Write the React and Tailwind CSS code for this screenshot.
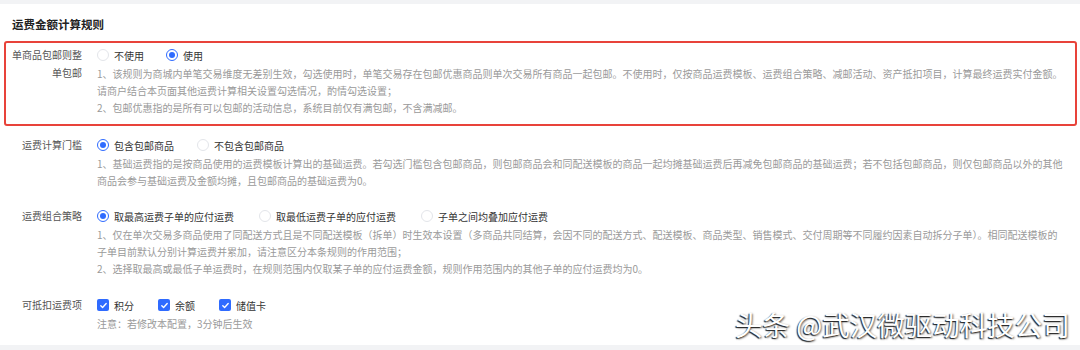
const Radio = ({ checked }) => (
  <span
    className={
      "flex h-[12px] w-[12px] shrink-0 items-center justify-center rounded-full border bg-white " +
      (checked ? "border-[#2f6bff]" : "border-[#e3e5ea]")
    }
  >
    {checked && <span className="h-[6px] w-[6px] rounded-full bg-[#2f6bff]" />}
  </span>
);

const Check = () => (
  <span className="flex h-[12px] w-[12px] shrink-0 items-center justify-center rounded-[2px] bg-[#2f6bff]">
    <svg width="9" height="9" viewBox="0 0 10 10" fill="none">
      <path d="M2 5.2l2 2 4-4.4" stroke="#fff" strokeWidth="1.5" strokeLinecap="round" strokeLinejoin="round" />
    </svg>
  </span>
);

const Options = ({ items, gap }) => (
  <div className={"flex h-[18px] items-center " + gap}>
    {items.map(([label, checked]) => (
      <label key={label} className="flex items-center gap-[5px] text-[#333]">
        <Radio checked={checked} />
        <span>{label}</span>
      </label>
    ))}
  </div>
);

const Desc = ({ lines }) => (
  <div className="mt-[1px] text-[#9a9a9a]">
    {lines.map((l) => (
      <div key={l} className="whitespace-nowrap leading-[17px]">
        {l}
      </div>
    ))}
  </div>
);

const Row = ({ label, children, className = "" }) => (
  <div className={"flex " + className}>
    <div className="w-[70px] shrink-0 text-right leading-[18px] text-[#555]">{label}</div>
    <div className="ml-[15px] min-w-0 flex-1">{children}</div>
  </div>
);

export default function App() {
  return (
    <div
      className="relative flex h-[350px] w-[1080px] flex-col overflow-hidden bg-white text-[10px]"
      style={{ fontFamily: '"Noto Sans CJK SC", "Noto Sans", sans-serif' }}
    >
      <div className="h-[4px] bg-[#f2f3f5]" />
      <h2 className="ml-[12px] mt-[11px] text-[11.5px] font-bold leading-[18px] text-[#222]">运费金额计算规则</h2>

      <div className="ml-[4px] mr-[3px] mt-[8px] rounded-[3px] border-2 border-[#e8433a] pb-[8px] pl-[6px] pt-[3px]">
        <Row label={<>单商品包邮则整<br />单包邮</>}>
          <Options gap="gap-[22px]" items={[["不使用", false], ["使用", true]]} />
          <Desc
            lines={[
              "1、该规则为商城内单笔交易维度无差别生效，勾选使用时，单笔交易存在包邮优惠商品则单次交易所有商品一起包邮。不使用时，仅按商品运费模板、运费组合策略、减邮活动、资产抵扣项目，计算最终运费实付金额。",
              "请商户结合本页面其他运费计算相关设置勾选情况，酌情勾选设置；",
              "2、包邮优惠指的是所有可以包邮的活动信息，系统目前仅有满包邮，不含满减邮。",
            ]}
          />
        </Row>
      </div>

      <Row label="运费计算门槛" className="ml-[12px] mt-[10px]">
        <Options gap="gap-[23px]" items={[["包含包邮商品", true], ["不包含包邮商品", false]]} />
        <Desc
          lines={[
            "1、基础运费指的是按商品使用的运费模板计算出的基础运费。若勾选门槛包含包邮商品，则包邮商品会和同配送模板的商品一起均摊基础运费后再减免包邮商品的基础运费；若不包括包邮商品，则仅包邮商品以外的其他",
            "商品会参与基础运费及金额均摊，且包邮商品的基础运费为0。",
          ]}
        />
      </Row>

      <Row label="运费组合策略" className="ml-[12px] mt-[18px]">
        <Options
          gap="gap-[25px]"
          items={[
            ["取最高运费子单的应付运费", true],
            ["取最低运费子单的应付运费", false],
            ["子单之间均叠加应付运费", false],
          ]}
        />
        <Desc
          lines={[
            "1、仅在单次交易多商品使用了同配送方式且是不同配送模板（拆单）时生效本设置（多商品共同结算，会因不同的配送方式、配送模板、商品类型、销售模式、交付周期等不同履约因素自动拆分子单）。相同配送模板的",
            "子单目前默认分别计算运费并累加，请注意区分本条规则的作用范围；",
            "2、选择取最高或最低子单运费时，在规则范围内仅取某子单的应付运费金额，规则作用范围内的其他子单的应付运费均为0。",
          ]}
        />
      </Row>

      <Row label="可抵扣运费项" className="ml-[12px] mt-[19px]">
        <div className="flex h-[18px] items-center gap-[24px] text-[#333]">
          {["积分", "余额", "储值卡"].map((t) => (
            <label key={t} className="flex items-center gap-[5px]">
              <Check />
              <span>{t}</span>
            </label>
          ))}
        </div>
        <Desc lines={["注意：若修改本配置，3分钟后生效"]} />
      </Row>

      <div className="mt-auto h-[5px] bg-[#f2f3f5]" />

      <div className="absolute left-[735px] top-[306px] whitespace-nowrap text-[27.5px] leading-[36px] text-white [text-shadow:-1px_1px_1px_#222,1px_1px_2px_rgba(0,0,0,0.6)]">
        头条 @武汉微驱动科技公司
      </div>
    </div>
  );
}
